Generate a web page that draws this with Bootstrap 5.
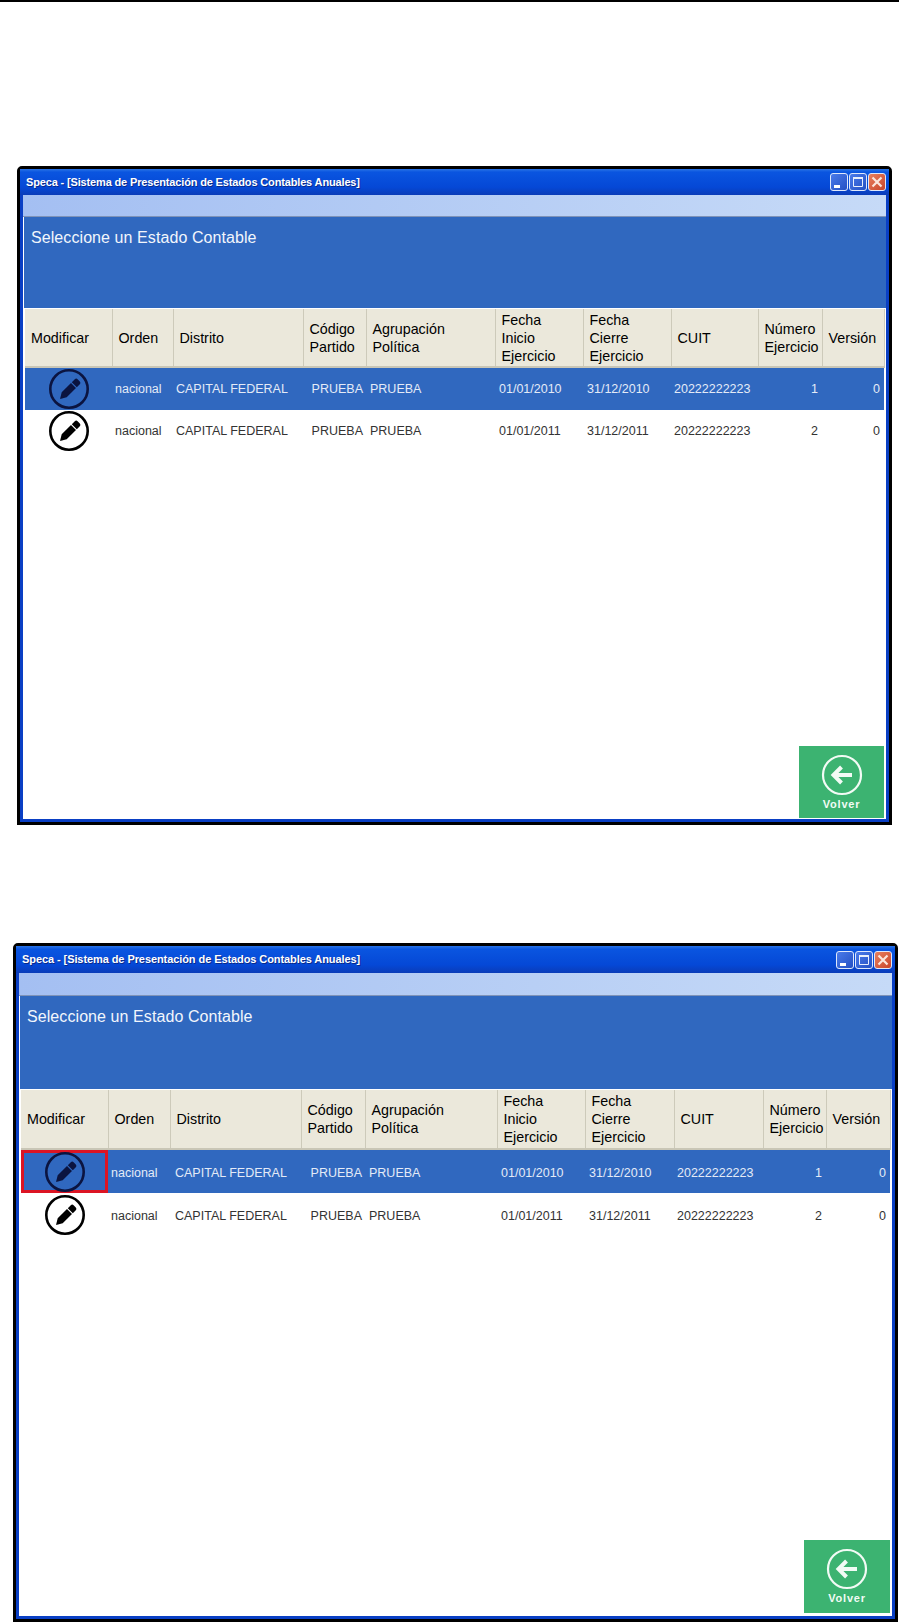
<!DOCTYPE html>
<html lang="es">
<head>
    <meta charset="UTF-8">
    <meta name="viewport" content="width=device-width, initial-scale=1.0">
    <title>Speca</title>
    <link href="https://cdn.jsdelivr.net/npm/bootstrap@5.3.0/dist/css/bootstrap.min.css" rel="stylesheet">
    <style>
        body { background: #fff; font-family: "Liberation Sans", Arial, sans-serif; }
        .top-rule { height: 2px; background: #000; }

        .xp-win { border: 3px solid #000; background: #0a3fc4; padding: 0 3px 3px; border-radius: 5px 5px 0 0; }
        .win-one { width: 875px; height: 659px; margin: 164px 0 0 17px; }
        .win-two { width: 885px; height: 679px; margin: 118px 0 0 13px; }

        .xp-title { background: linear-gradient(#2a74e6 0, #0a55e0 12%, #0548d6 70%, #0a3cb8 100%); margin: 0 -3px; padding: 0 3px 0 6px; height: 26px; }
        .win-two .xp-title { height: 27px; }
        .xp-title span { color: #fff; font-size: 11px; font-weight: 700; letter-spacing: -.15px; text-shadow: 1px 1px 0 #0a2a8a; }
        .win-two .xp-title span { letter-spacing: -.08px; }
        .xp-btn { width: 18px; height: 18px; border: 1px solid #dfe8fb; border-radius: 3px; background: linear-gradient(135deg, #4a7bea, #2450c4); position: relative; }
        .xp-btn.xp-close { background: linear-gradient(135deg, #e8805e, #c8452a); }
        .xp-btn svg { display: block; width: 16px; height: 16px; }
        .win-btns { gap: 1px; }

        .win-body { background: #fff; }
        .xp-band { height: 22px; background: linear-gradient(90deg, #a4bff2, #c6daf7); box-shadow: inset 0 -1px 0 #7f93b8; }
        .win-two .xp-band { height: 23px; }
        .xp-head { height: 91px; background: #3068bf; margin-left: 1px; padding: 10px 7px; color: #f2f6fc; font-size: 16px; letter-spacing: .08px; line-height: 22px; }
        .win-two .xp-head { height: 93px; }

        .spk-grid { table-layout: fixed; margin: 1px 0 0 2px; width: 859px; font-size: 12.5px; }
        .win-two .spk-grid { width: 869px; margin-left: 2px; }
        .spk-grid th { background: #ebe8db; font-weight: 400; color: #000; font-size: 14.3px; line-height: 18px; padding: 0 0 0 6px; height: 58px; vertical-align: middle; border-right: 1px solid #cdcaba; border-bottom: 2px solid #c9c6b6; white-space: nowrap; overflow: hidden; }
        .win-two .spk-grid th { height: 59px; }
        .spk-grid td { padding: 0 3px; vertical-align: middle; height: 42px; white-space: nowrap; color: #333; background: #fff; }
        .spk-grid tr.row-sel td { background: #3068bf; color: #e4ebf7; height: 43px; }
        .win-two .spk-grid td { height: 43px; padding-top: 3px; }
        .win-two .spk-grid tr.row-sel td { height: 44px; }
        .win-two .spk-grid td.dist { padding-left: 5px; }
        .spk-grid td.cell-icon, .win-two .spk-grid td.cell-icon { padding: 0; }
        .spk-grid td.cell-mark { box-shadow: inset 0 0 0 3px #dc1423; }
        .spk-grid td.num { text-align: right; padding-right: 4px; }
        .spk-grid td.code { text-align: right; padding-right: 3px; }
        .spk-grid td.gap-l { padding-left: 4px; }
        .spk-grid td.date { padding-left: 4px; }
        .edit-ico { display: block; width: 40px; height: 40px; margin: 0 auto; color: #000; }
        .row-sel .edit-ico { color: #0b1440; }

        .win-one .col-a { width: 87px; } .win-one .col-b { width: 61px; } .win-one .col-c { width: 130px; }
        .win-one .col-d { width: 63px; } .win-one .col-e { width: 129px; } .win-one .col-f { width: 88px; }
        .win-one .col-g { width: 88px; } .win-one .col-h { width: 87px; } .win-one .col-i { width: 64px; } .win-one .col-j { width: 62px; }
        .win-two .col-a { width: 87px; } .win-two .col-b { width: 62px; } .win-two .col-c { width: 131px; }
        .win-two .col-d { width: 64px; } .win-two .col-e { width: 132px; } .win-two .col-f { width: 88px; }
        .win-two .col-g { width: 89px; } .win-two .col-h { width: 89px; } .win-two .col-i { width: 63px; } .win-two .col-j { width: 64px; }

        .back-btn { width: 85px; height: 72px; background: #3cb371; color: #f2fbf5; font-size: 11px; font-weight: 700; letter-spacing: .8px; margin: 0 2px 1px 0; }
        .win-two .back-btn { width: 86px; height: 73px; margin-bottom: 3px; }
        .back-btn svg { width: 42px; height: 42px; margin-top: 8px; }
        .back-btn span { line-height: 14px; margin-top: 1px; }
    </style>
</head>
<body>
    <svg width="0" height="0" class="d-block position-absolute">
        <symbol id="ico-edit" viewBox="0 0 40 40">
            <circle cx="20" cy="20" r="18.7" fill="none" stroke="currentColor" stroke-width="2.6"/>
            <path fill="currentColor" d="M11 30 12.7 23.3 22 14 27 19 17.7 28.3ZM22.8 13.2 25.8 10.2a2 2 0 0 1 2.8 0l2.2 2.2a2 2 0 0 1 0 2.8L27.8 18.2Z"/>
        </symbol>
        <symbol id="ico-back" viewBox="0 0 42 42">
            <circle cx="21" cy="21" r="19" fill="none" stroke="currentColor" stroke-width="2.2"/>
            <path fill="none" stroke="currentColor" stroke-width="4" d="M31 21H14M20.5 13 12.5 21l8 8"/>
        </symbol>
        <symbol id="ico-min" viewBox="0 0 16 16"><path fill="#fff" d="M3 11h6v3H3z"/></symbol>
        <symbol id="ico-max" viewBox="0 0 16 16"><path fill="none" stroke="#e8effc" stroke-width="1" d="M3.5 4.5h9v8h-9z"/><path fill="#e8effc" d="M3 3h10v2H3z"/></symbol>
        <symbol id="ico-close" viewBox="0 0 16 16"><path fill="none" stroke="#fbe6dc" stroke-width="2.2" d="M3.5 3.5l9 9M12.5 3.5l-9 9"/></symbol>
    </svg>

    <div class="top-rule"></div>

    <div class="xp-win win-one d-flex flex-column">
        <div class="xp-title d-flex align-items-center justify-content-between">
            <span>Speca - [Sistema de Presentación de Estados Contables Anuales]</span>
            <div class="d-flex win-btns">
                <div class="xp-btn"><svg><use href="#ico-min"/></svg></div>
                <div class="xp-btn"><svg><use href="#ico-max"/></svg></div>
                <div class="xp-btn xp-close"><svg><use href="#ico-close"/></svg></div>
            </div>
        </div>
        <div class="win-body flex-fill d-flex flex-column">
            <div class="xp-band"></div>
            <div class="xp-head">Seleccione un Estado Contable</div>
            <table class="table table-borderless spk-grid mb-0">
                <colgroup>
                    <col class="col-a"><col class="col-b"><col class="col-c"><col class="col-d"><col class="col-e">
                    <col class="col-f"><col class="col-g"><col class="col-h"><col class="col-i"><col class="col-j">
                </colgroup>
                <thead>
                    <tr>
                        <th>Modificar</th><th>Orden</th><th>Distrito</th><th>Código<br>Partido</th><th>Agrupación<br>Política</th>
                        <th>Fecha<br>Inicio<br>Ejercicio</th><th>Fecha<br>Cierre<br>Ejercicio</th><th>CUIT</th><th>Número<br>Ejercicio</th><th>Versión</th>
                    </tr>
                </thead>
                <tbody>
                    <tr class="row-sel">
                        <td class="cell-icon"><svg class="edit-ico"><use href="#ico-edit"/></svg></td>
                        <td>nacional</td><td class="dist">CAPITAL FEDERAL</td><td class="code">PRUEBA</td><td class="gap-l">PRUEBA</td>
                        <td class="date">01/01/2010</td><td class="date">31/12/2010</td><td>20222222223</td><td class="num">1</td><td class="num">0</td>
                    </tr>
                    <tr>
                        <td class="cell-icon"><svg class="edit-ico"><use href="#ico-edit"/></svg></td>
                        <td>nacional</td><td class="dist">CAPITAL FEDERAL</td><td class="code">PRUEBA</td><td class="gap-l">PRUEBA</td>
                        <td class="date">01/01/2011</td><td class="date">31/12/2011</td><td>20222222223</td><td class="num">2</td><td class="num">0</td>
                    </tr>
                </tbody>
            </table>
            <div class="d-flex justify-content-end mt-auto">
                <div class="back-btn d-flex flex-column align-items-center">
                    <svg><use href="#ico-back"/></svg>
                    <span>Volver</span>
                </div>
            </div>
        </div>
    </div>

    <div class="xp-win win-two d-flex flex-column">
        <div class="xp-title d-flex align-items-center justify-content-between">
            <span>Speca - [Sistema de Presentación de Estados Contables Anuales]</span>
            <div class="d-flex win-btns">
                <div class="xp-btn"><svg><use href="#ico-min"/></svg></div>
                <div class="xp-btn"><svg><use href="#ico-max"/></svg></div>
                <div class="xp-btn xp-close"><svg><use href="#ico-close"/></svg></div>
            </div>
        </div>
        <div class="win-body flex-fill d-flex flex-column">
            <div class="xp-band"></div>
            <div class="xp-head">Seleccione un Estado Contable</div>
            <table class="table table-borderless spk-grid mb-0">
                <colgroup>
                    <col class="col-a"><col class="col-b"><col class="col-c"><col class="col-d"><col class="col-e">
                    <col class="col-f"><col class="col-g"><col class="col-h"><col class="col-i"><col class="col-j">
                </colgroup>
                <thead>
                    <tr>
                        <th>Modificar</th><th>Orden</th><th>Distrito</th><th>Código<br>Partido</th><th>Agrupación<br>Política</th>
                        <th>Fecha<br>Inicio<br>Ejercicio</th><th>Fecha<br>Cierre<br>Ejercicio</th><th>CUIT</th><th>Número<br>Ejercicio</th><th>Versión</th>
                    </tr>
                </thead>
                <tbody>
                    <tr class="row-sel">
                        <td class="cell-icon cell-mark"><svg class="edit-ico"><use href="#ico-edit"/></svg></td>
                        <td>nacional</td><td class="dist">CAPITAL FEDERAL</td><td class="code">PRUEBA</td><td class="gap-l">PRUEBA</td>
                        <td class="date">01/01/2010</td><td class="date">31/12/2010</td><td>20222222223</td><td class="num">1</td><td class="num">0</td>
                    </tr>
                    <tr>
                        <td class="cell-icon"><svg class="edit-ico"><use href="#ico-edit"/></svg></td>
                        <td>nacional</td><td class="dist">CAPITAL FEDERAL</td><td class="code">PRUEBA</td><td class="gap-l">PRUEBA</td>
                        <td class="date">01/01/2011</td><td class="date">31/12/2011</td><td>20222222223</td><td class="num">2</td><td class="num">0</td>
                    </tr>
                </tbody>
            </table>
            <div class="d-flex justify-content-end mt-auto">
                <div class="back-btn d-flex flex-column align-items-center">
                    <svg><use href="#ico-back"/></svg>
                    <span>Volver</span>
                </div>
            </div>
        </div>
    </div>

    <script src="https://cdn.jsdelivr.net/npm/bootstrap@5.3.0/dist/js/bootstrap.bundle.min.js"></script>
</body>
</html>
